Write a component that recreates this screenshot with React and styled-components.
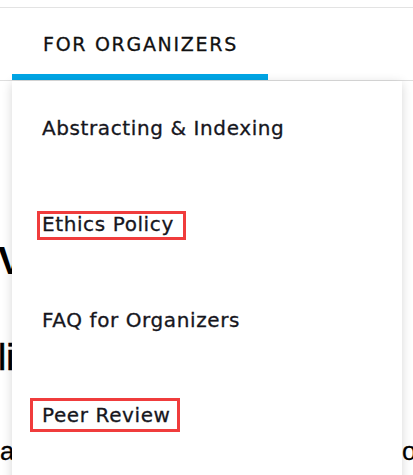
import React from "react";
import styled, { createGlobalStyle } from "styled-components";

const GlobalStyle = createGlobalStyle`
  html, body {
    margin: 0;
    padding: 0;
    background: #ffffff;
  }
  body {
    font-family: "DejaVu Sans", "Open Sans", sans-serif;
    color: #16161d;
  }
`;

const menuItems = [
  { id: "abs", label: "Abstracting & Indexing" },
  { id: "eth", label: "Ethics Policy", mark: "tight" },
  { id: "faq", label: "FAQ for Organizers" },
  { id: "peer", label: "Peer Review", mark: "loose" }
];

const App = () => {
  return (
    <Page>
      <GlobalStyle />
      <NavBar>
        <NavItem active>FOR ORGANIZERS</NavItem>
      </NavBar>

      <Content>
        <Heading>Volumes</Heading>
        <SubHeading>lists of proceedings</SubHeading>
        <Paragraph>
          <span>all papers in this series are</span>
          <span>open access</span>
        </Paragraph>
      </Content>

      <Dropdown>
        {menuItems.map((item) => (
          <MenuRow key={item.id}>
            <MenuLink mark={item.mark}>{item.label}</MenuLink>
          </MenuRow>
        ))}
      </Dropdown>
    </Page>
  );
};

export default App;

const Page = styled.div`
  position: relative;
  width: 413px;
  height: 475px;
  overflow: hidden;
  background: #fff;
`;

const NavBar = styled.nav`
  margin-top: 7px;
  height: 72px;
  border-top: 1px solid #e3e3e3;
  border-bottom: 1px solid #dedede;
  display: flex;
  padding-left: 12px;
`;

const NavItem = styled.div`
  width: 256px;
  box-sizing: border-box;
  padding: 26px 0 0 31px;
  font-size: 19px;
  line-height: 20px;
  letter-spacing: 1.7px;
  color: #111;
  -webkit-text-stroke: 0.3px #111;
  border-bottom: 6px solid ${(p) => (p.active ? "#00a6e6" : "transparent")};
`;

const Content = styled.main`
  display: flex;
  flex-direction: column;
  padding-top: 158px;
  font-family: "Liberation Sans", Arial, sans-serif;
  color: #000;
`;

const Heading = styled.h1`
  margin: 0 0 0 -2px;
  font-size: 39px;
  font-weight: 700;
  line-height: 44px;
`;

const SubHeading = styled.h2`
  margin: 53px 0 0 -2px;
  font-size: 37px;
  font-weight: 400;
  line-height: 44px;
  -webkit-text-stroke: 0.6px #000;
`;

const Paragraph = styled.p`
  margin: 56px 0 0;
  display: grid;
  grid-template-columns: 402px auto;
  font-size: 26px;
  line-height: 30px;
  white-space: nowrap;
  -webkit-text-stroke: 0.3px #000;

  span {
    overflow: hidden;
  }
`;

const Dropdown = styled.div`
  position: absolute;
  left: 12px;
  top: 81px;
  width: 390px;
  height: 420px;
  background: #fff;
  box-shadow: 0 2px 10px rgba(0, 0, 0, 0.16);
  display: flex;
  flex-direction: column;
  padding: 37px 0 0 30px;
  box-sizing: border-box;
`;

const MenuRow = styled.div`
  height: 96px;
  display: flex;
  align-items: flex-start;
`;

const marks = {
  tight: { pad: "0 9px 3px 2px", margin: "-3px 0 0 -5px" },
  loose: { pad: "4px 6px 4px 9px", margin: "-7px 0 0 -12px" }
};

const MenuLink = styled.span`
  display: inline-block;
  font-size: 20px;
  line-height: 20px;
  letter-spacing: 0.6px;
  color: #16161d;
  -webkit-text-stroke: 0.3px #16161d;
  border: ${(p) => (p.mark ? "3px solid #f03c3c" : "none")};
  padding: ${(p) => (p.mark ? marks[p.mark].pad : "0")};
  margin: ${(p) => (p.mark ? marks[p.mark].margin : "0")};
`;
